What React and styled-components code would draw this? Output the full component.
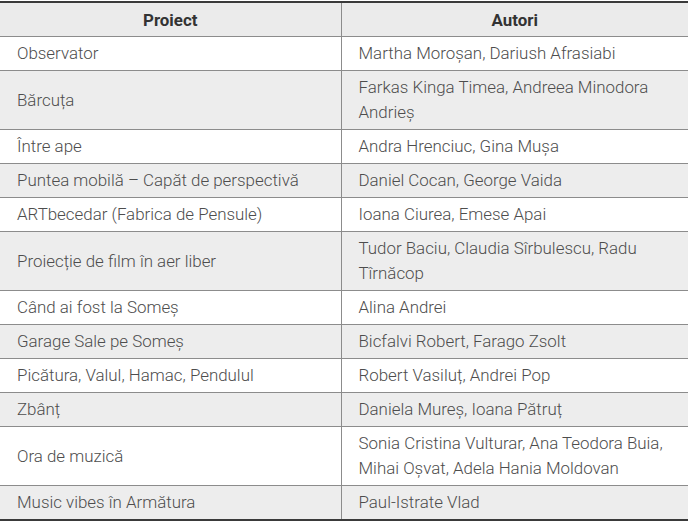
import styled, { createGlobalStyle } from "styled-components";

const rows = [
  ["Observator", "Martha Moroșan, Dariush Afrasiabi"],
  ["Bărcuța", "Farkas Kinga Timea, Andreea Minodora Andrieș"],
  ["Între ape", "Andra Hrenciuc, Gina Mușa"],
  ["Puntea mobilă – Capăt de perspectivă", "Daniel Cocan, George Vaida"],
  ["ARTbecedar (Fabrica de Pensule)", "Ioana Ciurea, Emese Apai"],
  ["Proiecție de film în aer liber", "Tudor Baciu, Claudia Sîrbulescu, Radu Tîrnăcop"],
  ["Când ai fost la Someș", "Alina Andrei"],
  ["Garage Sale pe Someș", "Bicfalvi Robert, Farago Zsolt"],
  ["Picătura, Valul, Hamac, Pendulul", "Robert Vasiluț, Andrei Pop"],
  ["Zbânț", "Daniela Mureș, Ioana Pătruț"],
  ["Ora de muzică", "Sonia Cristina Vulturar, Ana Teodora Buia, Mihai Oșvat, Adela Hania Moldovan"],
  ["Music vibes în Armătura", "Paul-Istrate Vlad"],
];

export default function App() {
  return (
    <>
      <GlobalStyle />
      <Table>
        <colgroup>
          <col style={{ width: 341 }} />
          <col />
        </colgroup>
        <thead>
          <tr>
            <Head>Proiect</Head>
            <Head>Autori</Head>
          </tr>
        </thead>
        <tbody>
          {rows.map(([proiect, autori], i) => (
            <Row key={proiect} $striped={i % 2 === 1}>
              <Cell>{proiect}</Cell>
              <Cell>{autori}</Cell>
            </Row>
          ))}
        </tbody>
      </Table>
    </>
  );
}

const GlobalStyle = createGlobalStyle`
  body {
    margin: 0;
    background: #fff;
    font-family: Roboto, "Liberation Sans", sans-serif;
  }
`;

const Table = styled.table`
  width: 689px;
  margin-top: 1px;
  border-collapse: collapse;
  table-layout: fixed;
  border-top: 2px solid #3a3a3a;
  border-bottom: 2px solid #3a3a3a;
`;

const Head = styled.th`
  height: 33px;
  padding: 0 17px;
  background: #ebebeb;
  color: #333;
  font-size: 16.9px;
  font-weight: 700;
  text-align: center;
  border: 1px solid #8c8c8c;
  border-top: none;
  &:first-child {
    border-left: none;
  }
`;

const Row = styled.tr`
  background: ${(p) => (p.$striped ? "#ededed" : "#fff")};
`;

const Cell = styled.td`
  padding: 4px 17px 4px 17px;
  color: #4d4d4d;
  font-size: 16.9px;
  font-weight: 300;
  line-height: 25px;
  border: 1px solid #8c8c8c;
  &:first-child {
    border-left: none;
  }
`;
